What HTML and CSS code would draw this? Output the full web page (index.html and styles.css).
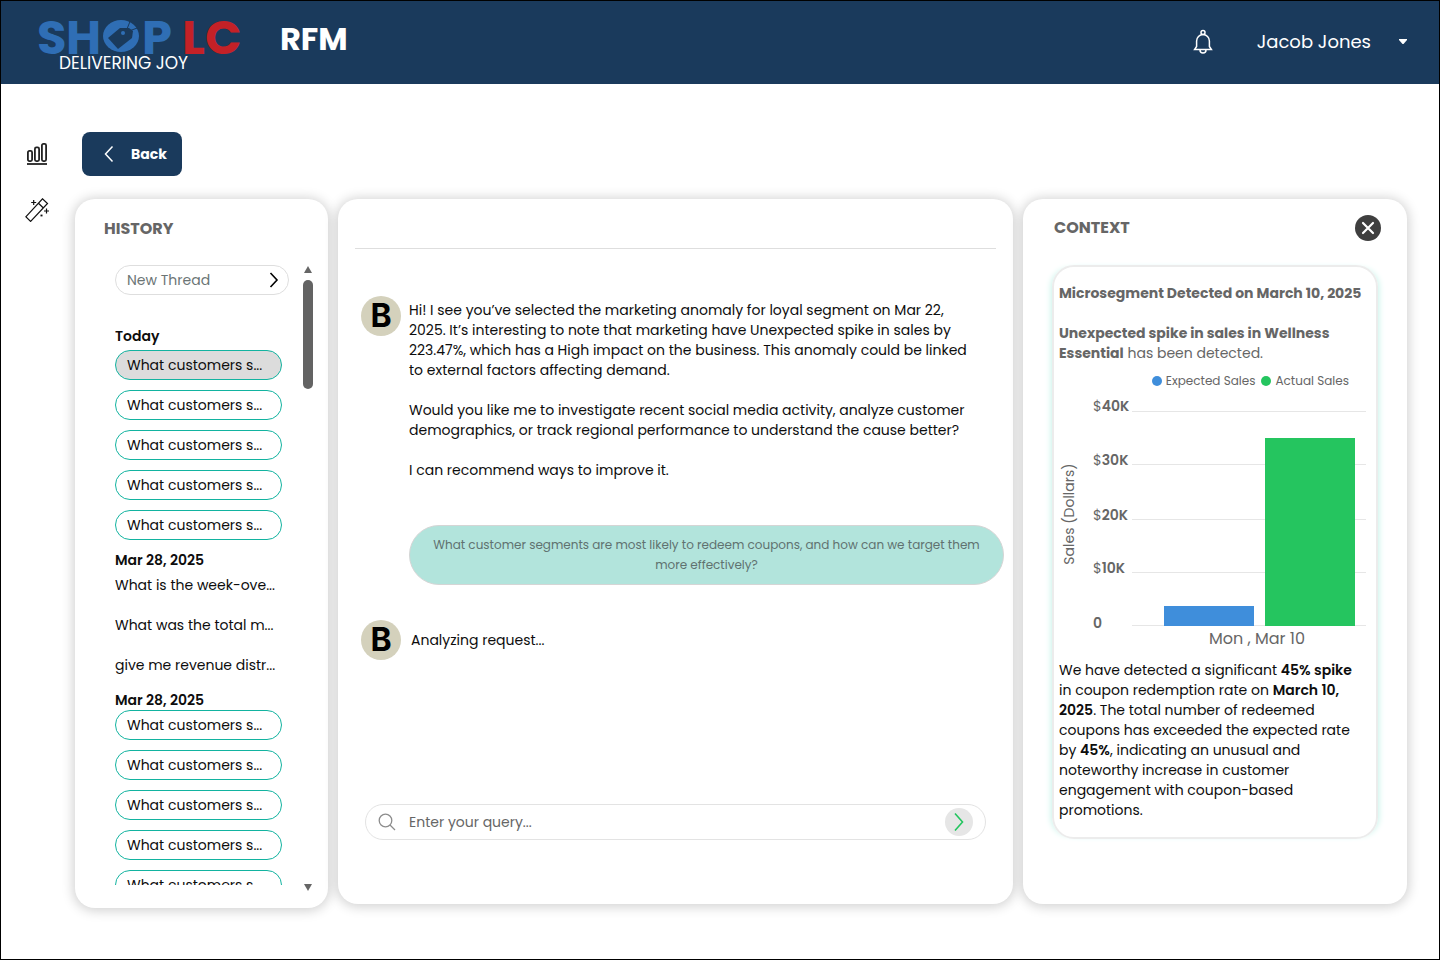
FILE: index.html
```html
<!DOCTYPE html>
<html lang="en">
<head>
<meta charset="utf-8">
<meta name="viewport" content="width=device-width, initial-scale=1">
<title>RFM</title>
<link rel="stylesheet" href="styles.css">
</head>
<body>
<div class="page">
  <header class="topbar">
    <a class="logo" href="#" aria-label="Shop LC, Delivering Joy">
      <svg width="208" height="60" viewBox="0 0 208 60">
        <g class="logo-letters">
          <text class="logo-blue" x="0" y="42">S</text>
          <text class="logo-blue" x="29" y="42">H</text>
          <text class="logo-blue" x="105" y="42">P</text>
          <text class="logo-red" x="145" y="42">L</text>
          <text class="logo-red" x="168" y="42">C</text>
        </g>
        <ellipse cx="84" cy="24" rx="18" ry="16" fill="#2f6eb5"/>
        <path d="M71 26 83 16 92 16 96 19 95 26 81 37Z" fill="#1a3a5c"/>
        <path d="m90 17 4-10M92 19l11-4" stroke="#1a3a5c" stroke-width="1" fill="none"/>
        <circle cx="86" cy="21" r="2" fill="#2f6eb5"/>
        <text class="logo-tag" x="22" y="57">DELIVERING JOY</text>
      </svg>
    </a>
    <h1 class="app-name">RFM</h1>
    <button class="bell" type="button" aria-label="Notifications">
      <svg width="20" height="26" viewBox="0 0 20 26" fill="none" stroke="#fff" stroke-width="1.5">
        <circle cx="10" cy="3.5" r="2"/>
        <path d="M3.6 17.5V12a6.4 6.4 0 0 1 12.8 0v5.500l2 3H1.600zM7 21a3 3 0 0 0 6 0"/>
      </svg>
    </button>
    <button class="user" type="button"><span>Jacob Jones</span>
      <svg width="8" height="5" viewBox="0 0 8 5"><path d="M0 0h8v1L4.500 5h-1L0 1z" fill="#fff"/></svg>
    </button>
  </header>

  <div class="body">
    <nav class="rail" aria-label="Sections">
      <a href="#" aria-label="Reports">
        <svg width="24" height="24" viewBox="0 0 24 24" fill="none" stroke="#222" stroke-width="1.800">
          <rect x="2.900" y="8.900" width="4.200" height="10.200" rx="1.500"/><rect x="9.900" y="5.400" width="4.200" height="13.700" rx="1.500"/><rect x="16.900" y="1.900" width="4.200" height="17.200" rx="1.500"/><path d="M2 22h20"/>
        </svg>
      </a>
      <a href="#" aria-label="Suggestions">
        <svg width="24" height="24" viewBox="0 0 24 24" fill="none" stroke="#111" stroke-width="1.200">
          <path d="M.8 18.800 17.500.8l5 4.700L5.600 23.400zM13.500 5.200l4.900 4.800M8.700 2v5M6.200 4.500h5M21.500 10.500v5M19 13h5"/><path d="M15.500 17.500h2" stroke-width="1.800"/>
        </svg>
      </a>
    </nav>

    <main class="main">
      <button class="back" type="button">
        <svg width="10" height="18" viewBox="0 0 10 18" fill="none" stroke="#fff" stroke-width="1.500"><path d="M8.500 1.500 1.500 9l7 7.500"/></svg>
        <span>Back</span>
      </button>

      <div class="panels">
        <section class="panel history">
          <h2 class="panel-title">HISTORY</h2>
          <div class="history-body">
            <div class="threads">
              <button class="new-thread" type="button"><span>New Thread</span>
                <svg width="10" height="16" viewBox="0 0 10 16" fill="none" stroke="#000" stroke-width="1.600"><path d="m1.500 1 6.500 7-6.500 7"/></svg>
              </button>
              <h3 class="day">Today</h3>
              <ul class="thread-list spaced">
                <li><button class="pill selected" type="button">What customers s...</button></li>
                <li><button class="pill" type="button">What customers s...</button></li>
                <li><button class="pill" type="button">What customers s...</button></li>
                <li><button class="pill" type="button">What customers s...</button></li>
                <li><button class="pill" type="button">What customers s...</button></li>
              </ul>
              <h3 class="day">Mar 28, 2025</h3>
              <ul class="thread-list">
                <li><button class="plain" type="button">What is the week-ove...</button></li>
                <li><button class="plain" type="button">What was the total m...</button></li>
                <li><button class="plain" type="button">give me revenue distr...</button></li>
              </ul>
              <h3 class="day">Mar 28, 2025</h3>
              <ul class="thread-list">
                <li><button class="pill" type="button">What customers s...</button></li>
                <li><button class="pill" type="button">What customers s...</button></li>
                <li><button class="pill" type="button">What customers s...</button></li>
                <li><button class="pill" type="button">What customers s...</button></li>
                <li><button class="pill" type="button">What customers s...</button></li>
              </ul>
            </div>
            <div class="scrollbar" aria-hidden="true">
              <span class="arrow-up"></span><span class="thumb"></span><span class="arrow-down"></span>
            </div>
          </div>
        </section>

        <section class="panel chat" aria-label="Chat">
          <div class="message">
            <span class="avatar">B</span>
            <div class="message-text">
              <p>Hi! I see you’ve selected the marketing anomaly for loyal segment on Mar 22, 2025. It’s interesting to note that marketing have Unexpected spike in sales by 223.47%, which has a High impact on the business. This anomaly could be linked to external factors affecting demand.</p>
              <p>Would you like me to investigate recent social media activity, analyze customer demographics, or track regional performance to understand the cause better?</p>
              <p>I can recommend ways to improve it.</p>
            </div>
          </div>
          <p class="question">What customer segments are most likely to redeem coupons, and how can we target them more effectively?</p>
          <div class="message pending">
            <span class="avatar">B</span>
            <p>Analyzing request...</p>
          </div>
          <form class="query">
            <svg width="18" height="18" viewBox="0 0 18 18" fill="none" stroke="#8c8c8c" stroke-width="1.300"><circle cx="7.500" cy="7.500" r="6.300"/><path d="m12 12 5 5"/></svg>
            <input type="text" aria-label="Query" placeholder="Enter your query...">
            <button class="send" type="button" aria-label="Send">
              <svg width="10" height="20" viewBox="0 0 10 20" fill="none" stroke="#22c55e" stroke-width="1.600"><path d="m1 1.500 7.500 8.500L1 18.500"/></svg>
            </button>
          </form>
        </section>

        <section class="panel context">
          <div class="context-head">
            <h2 class="panel-title">CONTEXT</h2>
            <button class="close" type="button" aria-label="Close">
              <svg width="14" height="14" viewBox="0 0 14 14" stroke="#fff" stroke-width="2.200" stroke-linecap="round"><path d="m2 2 10 10M12 2 2 12"/></svg>
            </button>
          </div>
          <article class="card">
            <h3 class="card-title">Microsegment Detected on March 10, 2025</h3>
            <p class="card-lead"><strong>Unexpected spike in sales in Wellness Essential</strong> has been detected.</p>
            <ul class="legend">
              <li><i class="dot expected"></i>Expected Sales</li>
              <li><i class="dot actual"></i>Actual Sales</li>
            </ul>
            <svg class="chart" viewBox="-1 1 322 260" role="img" aria-label="Sales in dollars, Monday March 10">
              <path d="M77 21.500h234M77 74.500h234M77 129.500h234M77 182.500h234M77 235.500h234" stroke="#e6e6e6"/>
              <rect x="109" y="216" width="90" height="20" fill="#3f8edb"/>
              <rect x="210" y="48" width="90" height="188" fill="#25c55f"/>
              <g class="ticks">
                <text x="38" y="21"><tspan class="unit">$</tspan>40K</text>
                <text x="38" y="75"><tspan class="unit">$</tspan>30K</text>
                <text x="38" y="130"><tspan class="unit">$</tspan>20K</text>
                <text x="38" y="183"><tspan class="unit">$</tspan>10K</text>
                <text x="38" y="238">0</text>
              </g>
              <text class="axis" text-anchor="middle" transform="translate(19 124) rotate(-90)">Sales (Dollars)</text>
              <text class="category" x="202" y="254" text-anchor="middle">Mon , Mar 10</text>
            </svg>
            <p class="summary">We have detected a significant <strong>45% spike</strong> in coupon redemption rate on <strong>March 10, 2025</strong>. The total number of redeemed coupons has exceeded the expected rate by <strong>45%</strong>, indicating an unusual and noteworthy increase in customer engagement with coupon-based promotions.</p>
          </article>
        </section>
      </div>
    </main>
  </div>
</div>
</body>
</html>
```
FILE: styles.css
```css
* { box-sizing: border-box; }
body, h1, h2, h3, p, ul { margin: 0; padding: 0; }
ul { list-style: none; }
body {
  font-family: Poppins, Inter, "Liberation Sans", sans-serif;
  font-size: 14px;
  line-height: 20px;
  color: #0d0d0d;
  background: #fff;
}
button, input { font: inherit; color: inherit; background: none; border: 0; padding: 0; }
button { cursor: pointer; }
svg { display: block; flex: none; }

.page { min-height: 100vh; border: 1px solid #000; }

.topbar {
  display: flex;
  align-items: center;
  height: 83px;
  padding: 0 32px 2px 36px;
  background: #1a3a5c;
  color: #fff;
}
.logo { text-decoration: none; }
.logo svg { overflow: visible; }
.logo-letters { font-size: 48px; font-weight: 700; }
.logo-blue { fill: #2f6eb5; }
.logo-red { fill: #c42127; }
.logo-tag { font-size: 17px; fill: #fff; }
.app-name { margin: 0 auto 6px 35px; font-size: 32px; line-height: 40px; }
.bell { margin-right: 44px; }
.user { display: flex; align-items: center; gap: 28px; font-size: 18px; line-height: 28px; }

.body { display: flex; padding: 48px 32px 48px 24px; }
.rail { display: flex; flex-direction: column; gap: 32px; width: 50px; padding-top: 10px; }
.main { flex: 1; min-width: 0; }
.back {
  display: flex;
  align-items: center;
  gap: 17px;
  height: 44px;
  margin-left: 7px;
  padding: 0 15px 0 22px;
  border-radius: 8px;
  background: #1a3a5c;
  color: #fff;
  font-weight: 700;
}

.panels { display: grid; grid-template-columns: 253px minmax(0, 1fr) 384px; gap: 10px; margin-top: 23px; }
.panel { border-radius: 20px; background: #fff; box-shadow: 0 1px 12px 2px rgba(0, 0, 0, .18); }
.panel-title { font-size: 16px; line-height: 24px; font-weight: 700; color: #666; }

.history { padding: 18px 15px 23px 29px; }
.history-body { display: flex; justify-content: space-between; margin-top: 24px; padding-left: 11px; }
.threads { width: 174px; height: 620px; overflow: hidden; }
.new-thread {
  display: flex;
  align-items: center;
  justify-content: space-between;
  width: 100%;
  height: 30px;
  margin-bottom: 31px;
  padding: 0 9px 0 11px;
  border: 1px solid #dedede;
  border-radius: 15px;
  color: #6b7575;
}
.day { font-size: 14px; line-height: 20px; font-weight: 600; }
.thread-list { display: grid; gap: 10px; width: 167px; margin-bottom: 10px; }
.thread-list.spaced { margin-top: 4px; }
.pill, .plain { display: block; width: 100%; height: 30px; text-align: left; white-space: nowrap; }
.pill { padding: 0 11px; border: 1px solid #12b3a0; border-radius: 15px; }
.pill.selected { background: #dcdcdc; }
.scrollbar { display: flex; flex-direction: column; align-items: center; width: 10px; padding-top: 1px; }
.arrow-up, .arrow-down { border: 4px solid transparent; }
.arrow-up { border-top: 0; border-bottom: 7px solid #666; }
.arrow-down { margin-top: auto; border-bottom: 0; border-top: 7px solid #666; }
.thumb { width: 10px; height: 109px; margin-top: 7px; border-radius: 5px; background: #636363; }
.history-body .scrollbar { margin-bottom: -6px; }

.chat { display: flex; flex-direction: column; margin-bottom: 4px; padding: 0 9px 64px 23px; }
.chat::before { content: ""; height: 49px; margin: 0 8px 48px -6px; border-bottom: 1px solid #dedede; }
.message { display: flex; gap: 8px; }
.chat .message:first-child { margin-top: -1px; }
.message-text { display: grid; gap: 20px; padding-top: 4px; max-width: 570px; }
.avatar {
  flex: none;
  width: 40px;
  height: 40px;
  border-radius: 50%;
  background: #d4d1bc;
  color: #000;
  font-family: Inter, "Liberation Sans", sans-serif;
  font-size: 32px;
  line-height: 40px;
  font-weight: 700;
  text-align: center;
}
.question {
  margin: 45px 0 35px 48px;
  padding: 9px 12px;
  border: 1px solid #d5d5d5;
  border-radius: 30px;
  background: #b2e4dc;
  color: #607270;
  font-size: 12px;
  text-align: center;
}
.pending { align-items: center; gap: 10px; }
.query {
  display: flex;
  align-items: center;
  height: 36px;
  margin: auto 18px 0 4px;
  padding: 0 12px;
  border: 1px solid #e3e3e3;
  border-radius: 18px;
}
.query input { flex: 1; min-width: 0; margin-left: 13px; outline: 0; }
.query input::placeholder { color: #666; opacity: 1; }
.send { display: grid; place-items: center; width: 28px; height: 28px; border-radius: 50%; background: #e6e6e6; }

.context { margin-bottom: 4px; padding: 16px 26px 0 30px; }
.context-head { display: flex; align-items: center; justify-content: space-between; padding-left: 1px; }
.close { display: grid; place-items: center; width: 26px; height: 26px; border-radius: 50%; background: #3f3f3f; }
.card {
  margin: 24px 3px 0 -1px;
  padding: 16px 0 17px;
  border: 2px solid #ececec;
  border-radius: 22px;
  box-shadow: 5px 0 6px -4px #c8f3ea, -5px 0 6px -4px #c8f3ea;
}
.card-title, .card-lead { margin-left: 5px; color: #666; font-size: 14px; line-height: 20px; }
.card-title { white-space: nowrap; }
.card-lead { margin-top: 20px; }
.card strong { font-weight: 700; }
.card .summary strong { font-weight: 600; }
.legend { display: flex; justify-content: flex-end; gap: 6px; margin-top: 8px; padding-right: 27px; font-size: 12px; color: #666; }
.legend li { display: flex; align-items: center; gap: 4px; }
.dot { width: 10px; height: 10px; border-radius: 50%; }
.expected { background: #3f8edb; }
.actual { background: #25c55f; }
.chart { width: 100%; height: auto; }
.chart text { fill: #666; }
.ticks { font-size: 14px; font-weight: 600; }
.unit { font-weight: 400; }
.axis { font-size: 14px; }
.category { font-size: 16px; }
.summary { margin: 9px 12px 0 5px; }
```
